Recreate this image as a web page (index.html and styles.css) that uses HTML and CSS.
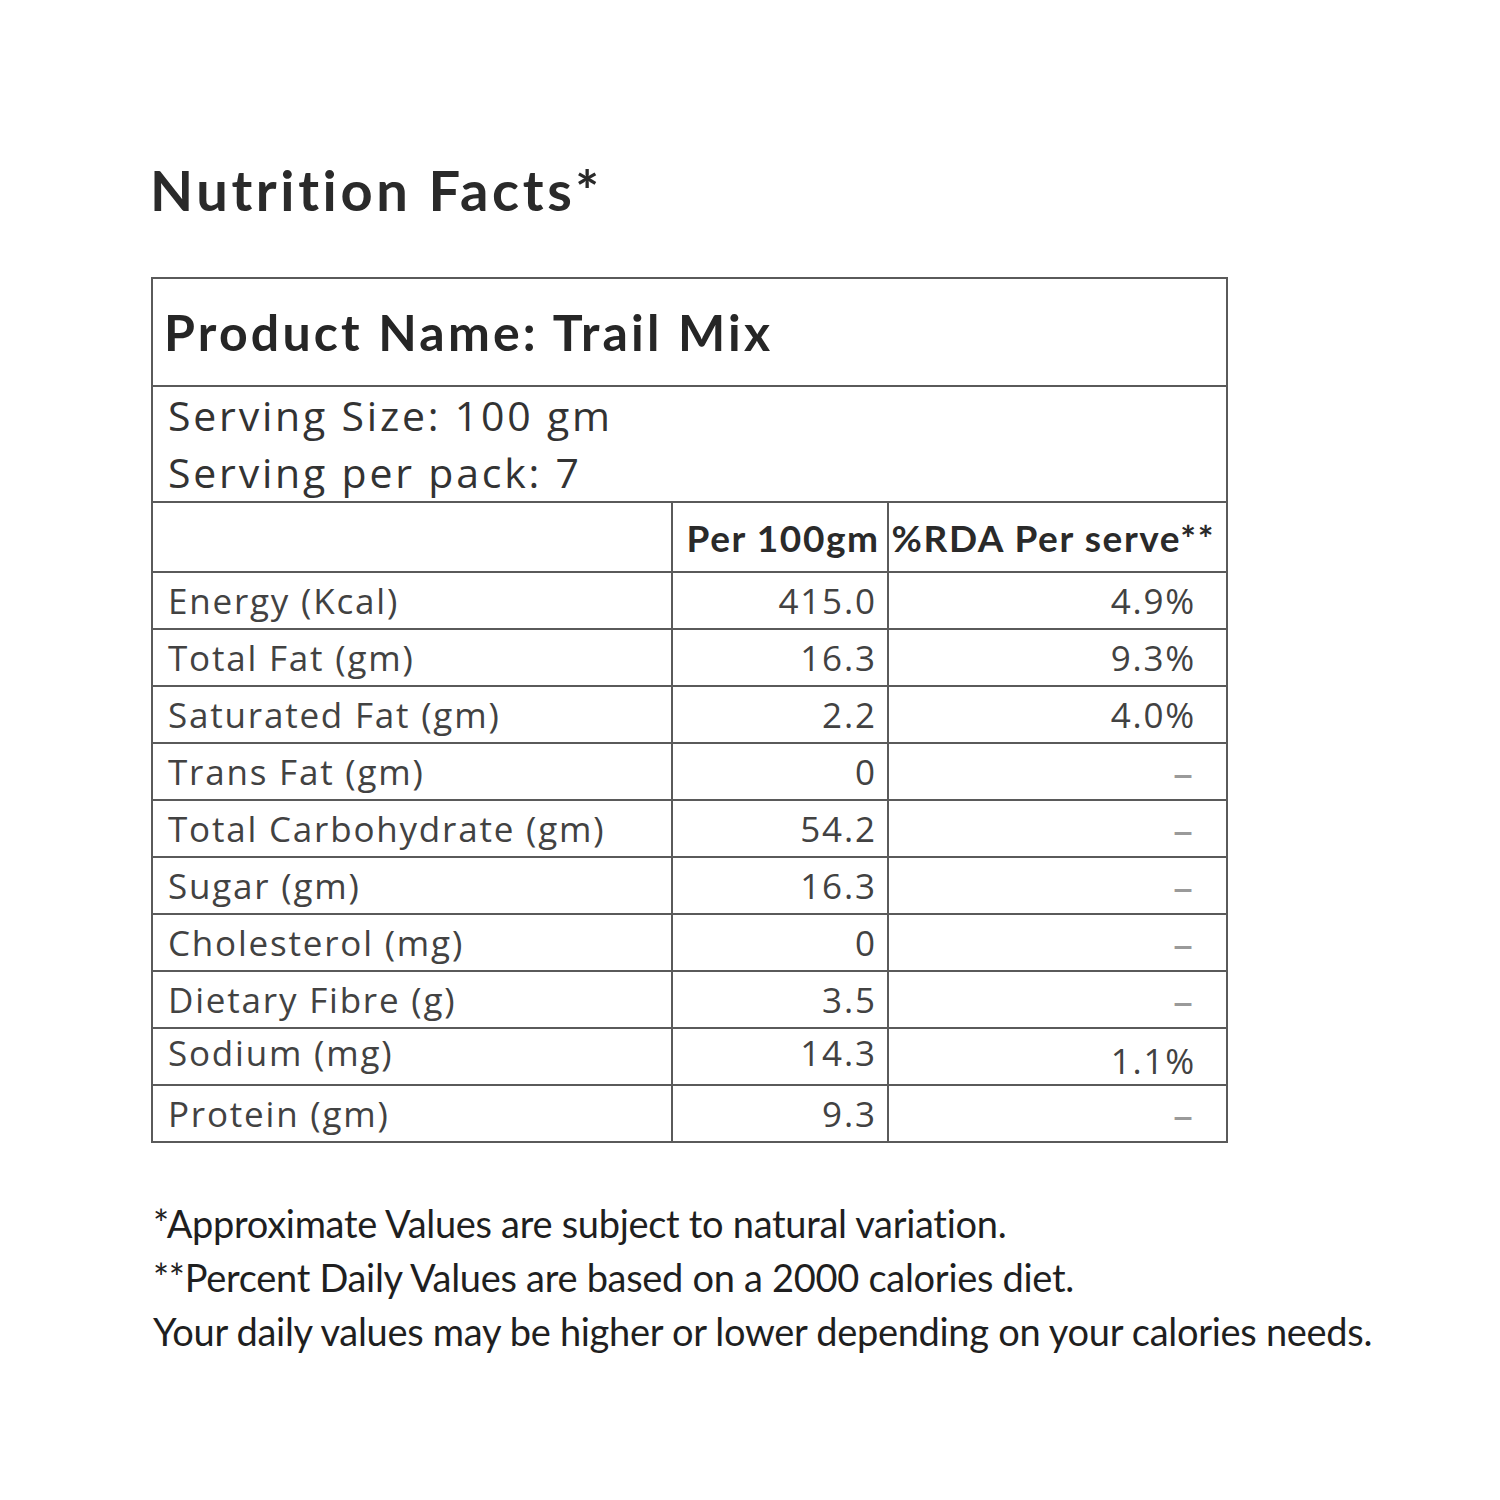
FILE: index.html
```html
<!DOCTYPE html>
<html lang='en'>
<head>
  <meta charset='utf-8' />
  <title>Nutrition Facts</title>
  <link rel="stylesheet" href="styles.css">
</head>
<body>
  <div id="main">
    <h1>Nutrition Facts*</h1>
    <table class="facts">
      <colgroup>
        <col class="col-name">
        <col class="col-per">
        <col class="col-rda">
      </colgroup>
      <tr class="product">
        <td colspan="3">Product Name: Trail Mix</td>
      </tr>
      <tr class="serving">
        <td colspan="3">Serving Size: 100 gm<br>Serving per pack: 7</td>
      </tr>
      <tr class="head">
        <td></td>
        <td class="per">Per 100gm</td>
        <td class="rda">%RDA Per serve**</td>
      </tr>
      <tr class="item">
        <td>Energy (Kcal)</td>
        <td class="per">415.0</td>
        <td class="rda">4.9%</td>
      </tr>
      <tr class="item">
        <td>Total Fat (gm)</td>
        <td class="per">16.3</td>
        <td class="rda">9.3%</td>
      </tr>
      <tr class="item">
        <td>Saturated Fat (gm)</td>
        <td class="per">2.2</td>
        <td class="rda">4.0%</td>
      </tr>
      <tr class="item">
        <td>Trans Fat (gm)</td>
        <td class="per">0</td>
        <td class="rda dash">–</td>
      </tr>
      <tr class="item">
        <td>Total Carbohydrate (gm)</td>
        <td class="per">54.2</td>
        <td class="rda dash">–</td>
      </tr>
      <tr class="item">
        <td>Sugar (gm)</td>
        <td class="per">16.3</td>
        <td class="rda dash">–</td>
      </tr>
      <tr class="item">
        <td>Cholesterol (mg)</td>
        <td class="per">0</td>
        <td class="rda dash">–</td>
      </tr>
      <tr class="item">
        <td>Dietary Fibre (g)</td>
        <td class="per">3.5</td>
        <td class="rda dash">–</td>
      </tr>
      <tr class="item sodium">
        <td>Sodium (mg)</td>
        <td class="per">14.3</td>
        <td class="rda low">1.1%</td>
      </tr>
      <tr class="item">
        <td>Protein (gm)</td>
        <td class="per">9.3</td>
        <td class="rda dash">–</td>
      </tr>
    </table>
    <div class="notes">
      <p>*Approximate Values are subject to natural variation.</p>
      <p>**Percent Daily Values are based on a 2000 calories diet.</p>
      <p>Your daily values may be higher or lower depending on your calories needs.</p>
    </div>
  </div>
</body>
</html>
```

FILE: styles.css
```css
body {
  margin: 0;
  background: #ffffff;
  color: #2b2b2b;
  font-family: "Open Sans", "DejaVu Sans", sans-serif;
}
#main {
  padding: 150px 0 0 150px;
}
h1 {
  margin: 0 0 47px 0;
  font-family: Lato, "Open Sans", sans-serif;
  font-weight: bold;
  font-size: 56px;
  line-height: 80px;
  color: #2a2a2a;
  letter-spacing: 3.6px;
}
.facts {
  border-collapse: collapse;
  width: 1077px;
  margin-left: 1px;
  border: 2px solid #555555;
}
.facts td {
  border: 2px solid #5a5a5a;
  padding: 0;
}
.col-name { width: 521px; }
.col-per { width: 216px; }
.col-rda { width: 340px; }
.product td {
  height: 106px;
  padding-left: 11px;
  font-family: Lato, "Open Sans", sans-serif;
  font-weight: bold;
  font-size: 50px;
  color: #262626;
  letter-spacing: 3.2px;
}
.serving td {
  padding-left: 15px;
  font-size: 41px;
  line-height: 57px;
  color: #333333;
  vertical-align: top;
  letter-spacing: 2.8px;
}
.head td {
  height: 68px;
  font-family: Lato, "Open Sans", sans-serif;
  font-weight: bold;
  font-size: 37px;
  color: #2a2a2a;
  text-align: right;
  letter-spacing: 1.6px;
}
.head td.per {
  padding-right: 7px;
}
.head td.rda {
  padding-right: 11px;
}
.item td {
  height: 55px;
  padding-left: 15px;
  font-size: 35px;
  color: #424242;
  letter-spacing: 1.8px;
}
.item td.per {
  text-align: right;
  padding-right: 10px;
}
.item td.rda {
  text-align: right;
  padding-right: 30px;
}
.item td.dash {
  color: #9a9a9a;
  font-size: 40px;
  letter-spacing: 0;
  padding-right: 33px;
}
.sodium td {
  vertical-align: top;
}
.sodium td.low {
  vertical-align: bottom;
}
.notes {
  margin-top: 53px;
  margin-left: 3px;
  font-family: Lato, "Open Sans", sans-serif;
  font-size: 38px;
  line-height: 54px;
  color: #1f1f1f;
  letter-spacing: -0.3px;
}
.notes p {
  margin: 0;
}
```
